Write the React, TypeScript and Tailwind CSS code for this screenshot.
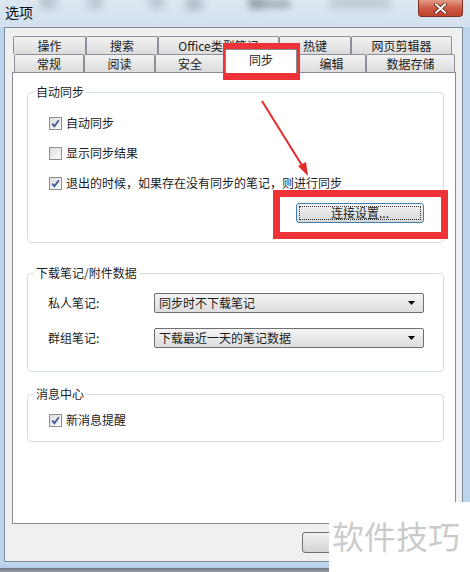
import * as React from "react";

const row1 = [
  { label: "操作", w: "w-[73px]" },
  { label: "搜索", w: "w-[72px]" },
  { label: "Office类型笔记", w: "w-[121px]" },
  { label: "热键", w: "w-[72px]" },
  { label: "网页剪辑器", w: "w-[101px]" },
];

const row2 = [
  { label: "常规", w: "w-[70px]" },
  { label: "阅读", w: "w-[71px]" },
  { label: "安全", w: "w-[70px]" },
  { label: "同步", w: "w-[72px]", active: true },
  { label: "编辑", w: "w-[69px]" },
  { label: "数据存储", w: "w-[89px]" },
];

const Tab: React.FC<{ label: string; w: string; active?: boolean }> = ({
  label,
  w,
  active = false,
}) =>
  active ? (
    <div
      className={`${w} relative z-10 h-[24px] -mb-px flex items-center justify-center pb-[3px] border border-b-0 border-[#898c95] bg-white rounded-t-[2px]`}
    >
      {label}
    </div>
  ) : (
    <div
      className={`${w} h-[18px] flex items-center justify-center border border-b-0 border-[#8d9098] rounded-t-[2px] bg-gradient-to-b from-[#f3f3f3] to-[#dcdcdc]`}
    >
      {label}
    </div>
  );

const Checkbox: React.FC<{ checked?: boolean; label: string }> = ({
  checked = false,
  label,
}) => (
  <div className="flex items-center h-[14px] gap-[4px]">
    <span className="w-[13px] h-[13px] border border-[#8e8f8f] bg-gradient-to-br from-[#dedede] to-[#fbfbfb] flex items-center justify-center">
      {checked && (
        <svg width="9" height="9" viewBox="0 0 9 9">
          <path
            d="M1.2 4.6 L3.4 7.2 L7.8 1.2"
            fill="none"
            stroke="#3f5a98"
            strokeWidth="1.8"
          />
        </svg>
      )}
    </span>
    <span>{label}</span>
  </div>
);

const Group: React.FC<{
  title: string;
  className: string;
  children: React.ReactNode;
}> = ({ title, className, children }) => (
  <fieldset
    className={`w-[417px] border border-[#d5dfe5] rounded-[4px] ${className}`}
  >
    <legend className="ml-[6px] px-[2px] leading-[14px] text-[#1e1e1e]">
      {title}
    </legend>
    {children}
  </fieldset>
);

const Select: React.FC<{ value: string }> = ({ value }) => (
  <div className="w-[270px] h-[20px] border border-[#707070] rounded-[2px] bg-gradient-to-b from-[#f4f4f4] to-[#dddddd] flex items-center pl-[4px] pr-[8px]">
    <span className="flex-1">{value}</span>
    <svg width="7" height="4" viewBox="0 0 7 4">
      <path d="M0 0 H7 L3.5 4 Z" fill="#000" />
    </svg>
  </div>
);

export default function App() {
  return (
    <div className="relative w-[470px] h-[572px] overflow-hidden bg-[#bdd4ee] font-['Noto_Sans_CJK_SC',sans-serif] text-[12px] text-[#1b1b1b]">
      {/* title bar */}
      <div className="relative h-[27px] bg-gradient-to-b from-[#dde7f1] to-[#d3e0ee] flex items-center pl-[5px] overflow-hidden">
        <div className="absolute left-[40px] top-[-4px] w-[16px] h-[12px] bg-[#9aa7b4] blur-[4px] opacity-60" />
        <div className="absolute left-[88px] top-[-4px] w-[14px] h-[12px] bg-[#9aa7b4] blur-[4px] opacity-60" />
        <div className="absolute left-[150px] top-[-4px] w-[14px] h-[12px] bg-[#9aa7b4] blur-[4px] opacity-60" />
        <div className="absolute left-[186px] top-[-2px] w-[16px] h-[12px] bg-[#8e9aa6] blur-[4px] opacity-60" />
        <div className="absolute left-[248px] top-[-4px] w-[16px] h-[12px] bg-[#8e9aa6] blur-[4px] opacity-60" />
        <div className="absolute left-[250px] top-[0px] w-[40px] h-[8px] bg-[#8a95a0] blur-[3px] opacity-70" />
        <div className="absolute left-[330px] top-[-2px] w-[60px] h-[10px] bg-[#9aa5b0] blur-[4px] opacity-50" />
        <span className="text-[14px] text-[#111] relative -mt-[2px]">选项</span>
        <div className="absolute left-[418px] top-0 w-[45px] h-[17px] rounded-b-[4px] border border-t-0 border-[#7e2f23] bg-gradient-to-b from-[#e39b88] via-[#cf5a45] to-[#c0442d] flex items-center justify-center">
          <svg width="13" height="11" viewBox="0 0 13 11">
            <path
              d="M2 1.5 L11 9.5 M11 1.5 L2 9.5"
              stroke="#5a2118"
              strokeWidth="3.6"
              strokeLinecap="square"
            />
            <path
              d="M2 1.5 L11 9.5 M11 1.5 L2 9.5"
              stroke="#fff"
              strokeWidth="2"
              strokeLinecap="square"
            />
          </svg>
        </div>
      </div>

      {/* client area */}
      <div className="ml-[4px] w-[459px] h-[535px] border border-[#7c8a99] bg-[#f0f0f0] pt-[8px]">
        <div className="flex ml-[8px] h-[18px]">
          {row1.map((t) => (
            <Tab key={t.label} {...t} />
          ))}
        </div>
        <div className="flex items-end ml-[9px] h-[18px]">
          {row2.map((t) => (
            <Tab key={t.label} {...t} />
          ))}
        </div>
        <div className="ml-[7px] w-[444px] h-[452px] border border-[#898c95] bg-white pl-[14px]">
          <Group title="自动同步" className="mt-[12px] h-[158px]">
            <div className="pl-[21px] pt-[9px] flex flex-col">
              <div className="h-[30px] flex items-center">
                <Checkbox checked label="自动同步" />
              </div>
              <div className="h-[30px] flex items-center">
                <Checkbox label="显示同步结果" />
              </div>
              <div className="h-[30px] flex items-center">
                <Checkbox
                  checked
                  label="退出的时候，如果存在没有同步的笔记，则进行同步"
                />
              </div>
            </div>
            <div className="flex justify-end pr-[19px] mt-[5px]">
              <div className="w-[128px] h-[20px] border border-[#3c7fb1] rounded-[3px] bg-gradient-to-b from-[#f5f5f5] to-[#d6d6d6] p-[2px]">
                <div className="w-full h-full border border-dotted border-[#333] flex items-center justify-center leading-none">
                  连接设置...
                </div>
              </div>
            </div>
          </Group>

          <Group title="下载笔记/附件数据" className="mt-[23px] h-[106px]">
            <div className="pl-[20px] pt-[13px] flex flex-col gap-[15px]">
              <div className="flex items-center">
                <span className="w-[106px]">私人笔记:</span>
                <Select value="同步时不下载笔记" />
              </div>
              <div className="flex items-center">
                <span className="w-[106px]">群组笔记:</span>
                <Select value="下载最近一天的笔记数据" />
              </div>
            </div>
          </Group>

          <Group title="消息中心" className="mt-[15px] h-[55px]">
            <div className="pl-[21px] pt-[12px]">
              <Checkbox checked label="新消息提醒" />
            </div>
          </Group>
        </div>
        <div className="ml-[297px] mt-[8px] w-[75px] h-[21px] border border-[#707070] rounded-[3px] bg-gradient-to-b from-[#f2f2f2] to-[#d4d4d4]" />
      </div>
      <div className="h-[6px] bg-gradient-to-b from-[#c3d9f0] to-[#b5cde8]" />
      <div className="h-[4px] bg-gradient-to-b from-[#6c7480] to-[#9aa0a8]" />

      {/* annotations */}
      <div className="absolute left-[223px] top-[43px] w-[77px] h-[37px] border-[7px] border-[#ee3338]" />
      <div className="absolute left-[273px] top-[190px] w-[175px] h-[49px] border-[7px] border-[#ee3338]" />
      <svg
        className="absolute left-0 top-0"
        width="470"
        height="572"
        viewBox="0 0 470 572"
      >
        <line
          x1="262"
          y1="101"
          x2="303"
          y2="167"
          stroke="#e42a2a"
          strokeWidth="2"
        />
        <path d="M308 176 L298 166 L306 162 Z" fill="#e42a2a" />
      </svg>

      {/* watermark */}
      <div className="absolute left-[329px] top-[502px] w-[141px] h-[70px] bg-white flex items-center pl-[3px] pb-[4px] text-[32px] text-[#cbcbcb] leading-none">
        软件技巧
      </div>
    </div>
  );
}
